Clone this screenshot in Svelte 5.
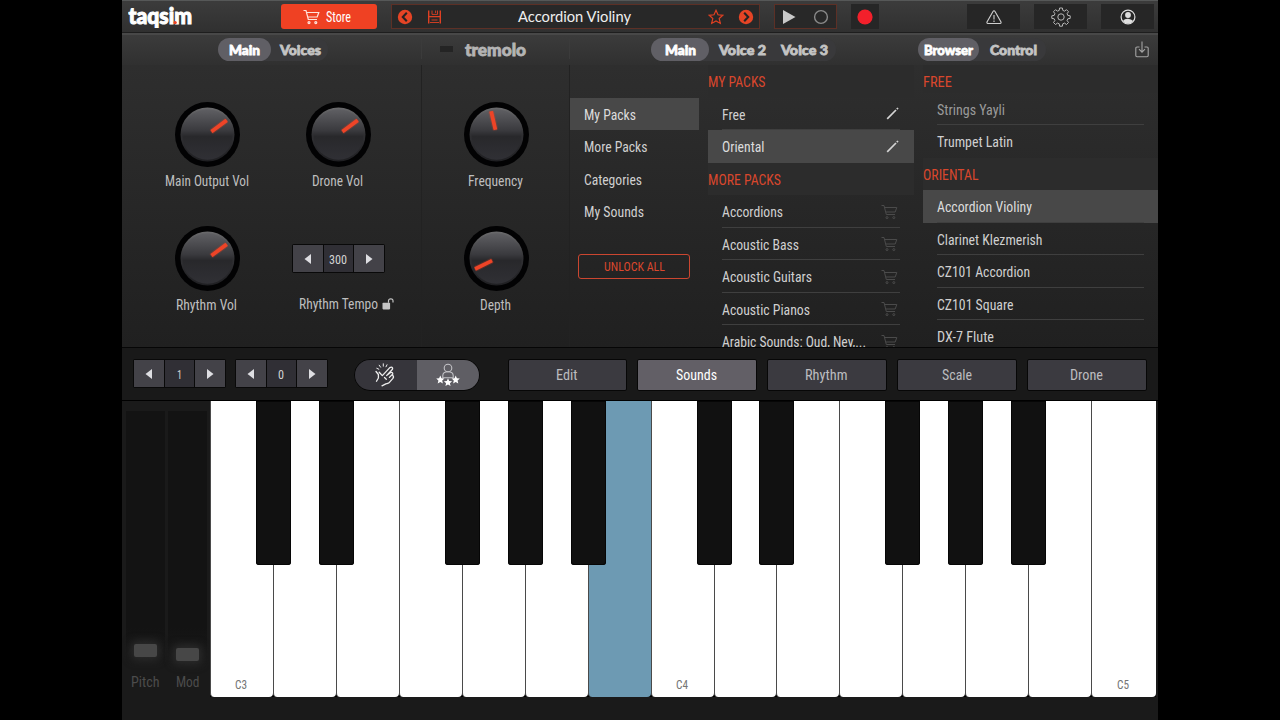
<script lang="ts">
  type Item = { name: string; w: number; icon?: string; selected?: boolean; dim?: boolean; line?: boolean };

  const menu: Item[] = [
    { name: 'My Packs', w: 52, selected: true },
    { name: 'More Packs', w: 63.5 },
    { name: 'Categories', w: 58 },
    { name: 'My Sounds', w: 60 },
  ];
  const myPacks: Item[] = [
    { name: 'Free', w: 23.5, icon: 'edit', line: true },
    { name: 'Oriental', w: 42.5, icon: 'edit', selected: true },
  ];
  const morePacks: Item[] = [
    { name: 'Accordions', w: 61, icon: 'cart', line: true },
    { name: 'Acoustic Bass', w: 77, icon: 'cart', line: true },
    { name: 'Acoustic Guitars', w: 90, icon: 'cart', line: true },
    { name: 'Acoustic Pianos', w: 88, icon: 'cart', line: true },
    { name: 'Arabic Sounds: Oud, Ney,...', w: 144, icon: 'cart' },
  ];
  const freeSounds: Item[] = [
    { name: 'Strings Yayli', w: 68, dim: true, line: true },
    { name: 'Trumpet Latin', w: 76 },
  ];
  const orientalSounds: Item[] = [
    { name: 'Accordion Violiny', w: 95, selected: true, line: true },
    { name: 'Clarinet Klezmerish', w: 105.5, line: true },
    { name: 'CZ101 Accordion', w: 93, line: true },
    { name: 'CZ101 Square', w: 76.5, line: true },
    { name: 'DX-7 Flute', w: 57 },
  ];
  const views = [
    { name: 'Edit', w: 21.5 },
    { name: 'Sounds', w: 41 },
    { name: 'Rhythm', w: 42.5 },
    { name: 'Scale', w: 30 },
    { name: 'Drone', w: 33 },
  ];

  // two octaves plus the closing C
  const notes = 'CDEFGABCDEFGABC'.split('');
  const labels: Record<number, string> = { 0: 'C3', 7: 'C4', 14: 'C5' };
  const pressed = 6;

  let view = $state('Sounds');
</script>

{#snippet fit(text: string, w: number, size = 14, cls = '')}
  <svg class="fit {cls}" width={w} height="16">
    <text x="0" y={8 + size * 0.355} font-size={size} textLength={w} lengthAdjust="spacingAndGlyphs">{text}</text>
  </svg>
{/snippet}

{#snippet cart()}
  <svg class="cart" viewBox="0 0 17 16" width="17" height="16">
    <path d="M.5 1.5H3L5.3 10.5H14M3.6 3.5H15.8L14.2 8H4.8" />
    <circle cx="6" cy="13.6" r="1" /><circle cx="12.8" cy="13.6" r="1" />
  </svg>
{/snippet}

{#snippet knob(name: string, w: number, angle: number)}
  <div class="control">
    <svg class="knob" viewBox="0 0 65 65" width="65" height="65">
      <circle cx="32.5" cy="32.5" r="32.5" fill="#020203" />
      <circle cx="32.5" cy="32.5" r="27" fill="url(#rim)" />
      <circle cx="32.5" cy="32.5" r="25.2" fill="url(#cap)" />
      <g transform="rotate({angle} 32.5 32.5)">
        <rect x="29.5" y="8" width="6" height="20.5" rx="2" fill="#e8401f" opacity=".22" />
        <rect x="30.6" y="8.6" width="3.8" height="19" rx=".6" fill="#ee4427" />
      </g>
    </svg>
    <div class="caption">{@render fit(name, w)}</div>
  </div>
{/snippet}

{#snippet stepper(value: string, w: number)}
  <div class="stepper">
    <button type="button" aria-label="Previous"><svg width="8" height="10"><path d="M7 0V10L.5 5Z" /></svg></button>
    <span>{@render fit(value, w, 13)}</span>
    <button type="button" aria-label="Next"><svg width="8" height="10"><path d="M1 0V10L7.5 5Z" /></svg></button>
  </div>
{/snippet}

{#snippet rows(items: Item[])}
  {#each items as item}
    <div class="row" class:selected={item.selected} class:dim={item.dim}>
      <div class="inner" class:line={item.line}>
        {@render fit(item.name, item.w)}
        {#if item.icon === 'cart'}
          {@render cart()}
        {:else if item.icon === 'edit'}
          <svg class="pencil" width="13" height="13"><path d="M1.2 11.8L10 3" /><path d="M10.8 2.2L12 1" /></svg>
        {/if}
      </div>
    </div>
  {/each}
{/snippet}

<svg class="defs" width="0" height="0">
  <linearGradient id="cap" x1="0" y1="0" x2="0" y2="1">
    <stop offset="0" stop-color="#5f5f63" />
    <stop offset=".42" stop-color="#3a3a3e" />
    <stop offset=".54" stop-color="#28282b" />
    <stop offset="1" stop-color="#303035" />
  </linearGradient>
  <linearGradient id="rim" x1="0" y1="0" x2="0" y2="1">
    <stop offset="0" stop-color="#6a6a6c" />
    <stop offset=".5" stop-color="#303033" />
    <stop offset="1" stop-color="#1f1f22" />
  </linearGradient>
</svg>

<div class="stage">
  <main class="app">
    <header class="top">
      <div class="logo">
        <svg width="66" height="28"><text x="0.5" y="23.5" font-size="22" textLength="63.5" lengthAdjust="spacingAndGlyphs">taqsim</text><circle cx="47.2" cy="22.6" r="1.6" /></svg>
      </div>
      <button type="button" class="store">{@render cart()}{@render fit('Store', 25)}</button>
      <div class="preset">
        <svg class="round" width="16" height="16"><circle cx="8" cy="8" r="7.2" /><path d="M9.8 3.8L5.8 8L9.8 12.2" /></svg>
        <svg class="save" width="13" height="14"><path d="M.7 .5V13.5M12.3 .5V13.5M.7 6.6H12.3" /><path class="thin" d="M4 .5V4.4H9.5V.5M7.6 .5V3M3.5 10H9.5M2 12.5H11" /></svg>
        <div class="title">{@render fit('Accordion Violiny', 113, 15)}</div>
        <svg class="star" width="16" height="16"><path d="M8 1.3L10 5.8L14.8 6.3L11.2 9.5L12.3 14.4L8 11.9L3.7 14.4L4.8 9.5L1.2 6.3L6 5.8Z" /></svg>
        <svg class="round" width="16" height="16"><circle cx="8" cy="8" r="7.2" /><path d="M6.2 3.8L10.2 8L6.2 12.2" /></svg>
      </div>
      <div class="transport">
        <svg width="14" height="16"><path d="M1 1L13.5 8L1 15Z" fill="#c9c9c9" /></svg>
        <svg width="16" height="16"><circle cx="8" cy="8" r="6.4" fill="none" stroke="#8a8a8a" stroke-width="1.4" /></svg>
      </div>
      <div class="slot rec"><svg width="16" height="16"><circle cx="8" cy="8" r="7.6" fill="#f3202b" /></svg></div>
      <div class="slot warn">
        <svg class="icon" width="16" height="16"><path d="M8 1.8Q8.6 1.8 9 2.5L15 13Q15.4 14.4 14.2 14.5H1.8Q.6 14.4 1 13L7 2.5Q7.4 1.8 8 1.8ZM8 6V10.4M8 11.6V13" /></svg>
      </div>
      <div class="slot gear">
        <svg class="icon" viewBox="0 0 20 20" width="20" height="20">
          <path d="M8.6 1h2.8l.4 2.4 1.7.7 2-1.4 2 2-1.4 2 .7 1.7 2.4.4v2.6l-2.4.4-.7 1.7 1.4 2-2 2-2-1.4-1.7.7-.4 2.4H8.6l-.4-2.4-1.7-.7-2 1.4-2-2 1.4-2-.7-1.7L.8 11.4V8.8l2.4-.4.7-1.7-1.4-2 2-2 2 1.4 1.7-.7Z" />
          <circle cx="10" cy="10" r="3.2" />
        </svg>
      </div>
      <div class="slot user">
        <svg width="16" height="16" fill="none" stroke="#dedede">
          <circle cx="8" cy="8" r="6.9" stroke-width="1.2" />
          <circle cx="8" cy="6" r="2.9" fill="#dedede" stroke="none" />
          <path d="M2.8 12Q4.8 9.6 8 9.8T13.2 12Q11.3 14.6 8 14.6T2.8 12Z" fill="#dedede" stroke="none" />
        </svg>
      </div>
    </header>

    <nav class="tabs">
      <div class="group first">
        <span class="tab on">{@render fit('Main', 31, 13.5, 'display')}</span>
        <span class="tab">{@render fit('Voices', 41, 13.5, 'display')}</span>
      </div>
      <div class="tremolo"><i class="led"></i>{@render fit('tremolo', 61, 17, 'display')}</div>
      <div class="group second">
        <span class="tab on">{@render fit('Main', 31, 13.5, 'display')}</span>
        <span class="tab">{@render fit('Voice 2', 47, 13.5, 'display')}</span>
        <span class="tab">{@render fit('Voice 3', 47, 13.5, 'display')}</span>
      </div>
      <div class="group third">
        <span class="tab on">{@render fit('Browser', 49, 13.5, 'display')}</span>
        <span class="tab">{@render fit('Control', 47, 13.5, 'display')}</span>
      </div>
      <svg class="import" width="14" height="17"><path d="M4.5 6H2Q.8 6 .8 7.2V14.5Q.8 15.7 2 15.7H12Q13.2 15.7 13.2 14.5V7.2Q13.2 6 12 6H9.5M7 .5V11M4 8.2L7 11.2L10 8.2" /></svg>
    </nav>

    <section class="panel">
      <div class="knobs main">
        {@render knob('Main Output Vol', 84, 53.5)}
        {@render knob('Drone Vol', 51, 53.5)}
        {@render knob('Rhythm Vol', 61, 53.5)}
        <div class="control tempo">
          {@render stepper('300', 18)}
          <div class="caption">
            {@render fit('Rhythm Tempo', 79)}
            <svg class="lock" width="13" height="12"><rect x=".5" y="4.8" width="7.6" height="6.6" rx=".8" /><path d="M6.5 4.8V3Q6.5 .8 8.8 .8T11 3V4.6" /></svg>
          </div>
        </div>
      </div>
      <div class="knobs trem">
        {@render knob('Frequency', 55, -13)}
        {@render knob('Depth', 31, -116)}
      </div>
      <div class="menu">
        {@render rows(menu)}
        <button type="button" class="unlock">{@render fit('UNLOCK ALL', 61, 12.5)}</button>
      </div>
      <div class="packs">
        <h2>{@render fit('MY PACKS', 57.5)}</h2>
        {@render rows(myPacks)}
        <h2>{@render fit('MORE PACKS', 73)}</h2>
        {@render rows(morePacks)}
      </div>
      <div class="sounds">
        <h2 class="stuck">{@render fit('FREE', 29)}</h2>
        {@render rows(freeSounds)}
        <h2>{@render fit('ORIENTAL', 55.5)}</h2>
        {@render rows(orientalSounds)}
      </div>
    </section>

    <div class="toolbar">
      {@render stepper('1', 5)}
      {@render stepper('0', 6)}
      <div class="mode">
        <span>
          <svg class="hand" viewBox="0 0 22 24" width="22" height="24">
            <path d="M2 8.5L4.4 11.5V15L2.5 18.3M5.2 9.2L8.3 12.6L15.8 4.6Q17.6 3.4 18.5 4.8Q19 5.8 18 6.8L12.6 12.6L16.6 9.6Q18.6 9 18.8 11L15.4 14.4M18.6 12.2Q20.2 13.6 18.9 15.4L15.4 19.4Q14 20.6 11.8 20.8L8 22.8M10.5 14.5L12.3 16.2" />
            <path class="snap" d="M5.2 2.2L6.6 4.2M9.3 .8V3.2M13 1.8L12 3.8M2.8 5.3L4.8 6.2" />
          </svg>
        </span>
        <span class="on">
          <svg class="person" viewBox="0 0 24 24" width="24" height="24">
            <circle cx="12" cy="5" r="3.8" />
            <path d="M6.8 14.8V12.5Q7 8.8 12 8.8T17.2 12.5V14.8Z" />
            <g>
              <path id="pip" d="M4.3 12.6L5.5 15.3L8.4 15.6L6.2 17.6L6.9 20.5L4.3 19L1.7 20.5L2.4 17.6L.2 15.6L3.1 15.3Z" />
              <use href="#pip" x="7.7" y="2.6" /><use href="#pip" x="15.4" />
            </g>
          </svg>
        </span>
      </div>
      <div class="views">
        {#each views as v}
          <button type="button" class:on={view === v.name} onclick={() => (view = v.name)}>{@render fit(v.name, v.w)}</button>
        {/each}
      </div>
    </div>

    <section class="play">
      <div class="wheels">
        <div class="wheel"><div class="track pitch"><i></i></div>{@render fit('Pitch', 28.5)}</div>
        <div class="wheel"><div class="track"><i></i></div>{@render fit('Mod', 23.5)}</div>
      </div>
      <div class="keys">
        {#each notes as note, i}
          <div class="key" class:pressed={i === pressed}>
            {#if i < notes.length - 1 && note !== 'E' && note !== 'B'}<i class="black"></i>{/if}
            {#if labels[i]}{@render fit(labels[i], 12, 12)}{/if}
          </div>
        {/each}
      </div>
    </section>
  </main>
</div>

<style>
  :global(body) { background: #000; }
  .stage {
    width: 1280px;
    height: 720px;
    overflow: hidden;
    background: #000;
    font-family: 'Roboto Condensed', Roboto, sans-serif;
  }
  .app {
    box-sizing: border-box;
    width: 1036px;
    height: 720px;
    margin-left: 122px;
    display: flex;
    flex-direction: column;
    background: #1b1b1b;
    color: #d2d2d2;
  }
  svg { display: block; flex: none; }
  .defs { position: absolute; }
  .fit { overflow: visible; fill: currentColor; }
  .display { font-family: Lato, sans-serif; font-weight: 900; stroke: currentColor; stroke-width: 0.8; }
  button { font: inherit; color: inherit; padding: 0; border: 0; cursor: pointer; }

  .top {
    display: flex;
    align-items: flex-start;
    box-sizing: border-box;
    height: 33px;
    padding: 4px 0 0 6px;
    background: linear-gradient(#3c3c3c, #303030);
    box-shadow: inset 0 1px #565858;
    border-bottom: 1px solid #1e1e1e;
  }
  .logo { width: 152.5px; margin-top: -4px; height: 28px; }
  .logo text { font-family: Lato, sans-serif; font-weight: 900; fill: #fff; stroke: #fff; stroke-width: 1; }
  .logo circle { fill: #ef4123; }
  .store {
    display: flex;
    align-items: center;
    justify-content: center;
    gap: 5px;
    width: 96.5px;
    height: 25px;
    margin-right: 14px;
    border-radius: 3px;
    background: #ef4123;
    color: #fff;
  }
  .store .fit { position: relative; left: -1px; }
  .cart { fill: none; stroke: #4b4b4b; stroke-width: 1; }
  .store .cart { stroke: #ffe3dc; stroke-width: 1.2; position: relative; left: -2px; }
  .preset, .transport {
    display: flex;
    align-items: center;
    box-sizing: border-box;
    height: 25px;
    border: 1px solid #5d3026;
    background: #282828;
  }
  .preset { width: 369px; padding: 0 5px 0 5px; margin-right: 14px; }
  .save { margin-left: 15px; fill: none; stroke: #e04022; stroke-width: 1.4; }
  .save .thin { stroke-width: 0.9; }
  .title { flex: 1; display: flex; justify-content: center; font-family: Lato, sans-serif; color: #efefef; }
  .star { margin-right: 14px; fill: none; stroke: #e04022; stroke-width: 1.2; }
  .round { fill: #e64425; }
  .round path { fill: none; stroke: #272322; stroke-width: 2.1; }
  .transport { width: 63px; padding: 0 7px; justify-content: space-between; margin-right: 14px; }
  .slot { display: flex; align-items: center; justify-content: center; width: 53px; height: 25px; background: #262626; margin-right: 14px; }
  .rec { width: 28px; margin-right: 88px; }
  .user { margin-right: 0; }
  .icon { fill: none; stroke: #cfcfcf; stroke-width: 1.1; }
  .gear .icon { stroke: #b8b8b8; stroke-width: 1; }

  .tabs {
    display: flex;
    align-items: center;
    height: 32px;
    background: linear-gradient(#3c3c3c, #303030);
    box-shadow: inset 0 2px #484848;
  }
  .tabs .fit { position: relative; top: 0.5px; }
  .group { display: flex; align-items: center; height: 23px; border-radius: 12px; background: #39393b; color: #c4c4c4; }
  .tab { display: flex; align-items: center; justify-content: center; height: 23px; border-radius: 12px; }
  .tab.on { background: #605f65; color: #fff; }
  .first { width: 110px; margin-left: 96px; gap: 9px; }
  .first .on { width: 53px; }
  .tremolo {
    display: flex;
    align-items: center;
    gap: 12px;
    box-sizing: border-box;
    width: 149px;
    height: 20px;
    margin-left: 93px;
    padding-left: 18px;
    border-left: 1px solid #3b3b3b;
    border-right: 1px solid #3b3b3b;
    color: #b4b4b4;
  }
  .led { width: 13px; height: 6px; background: #242424; }
  .second { width: 185px; margin-left: 81px; }
  .second .on { width: 58px; margin-right: 10px; }
  .second .tab + .tab + .tab { margin-left: 15px; }
  .third { width: 128px; margin-left: 82px; gap: 11px; }
  .third .on { width: 61px; }
  .import { margin-left: 88.5px; fill: none; stroke: #a4a4a4; stroke-width: 1.1; }

  .panel {
    display: flex;
    height: 282px;
    overflow: hidden;
    background: linear-gradient(#2e2e2e, #202020);
    border-bottom: 1px solid #060606;
  }
  .panel .fit { position: relative; top: 0.8px; }
  .knobs { display: grid; grid-auto-rows: 124.5px; padding-top: 36px; box-sizing: border-box; border-right: 1px solid #222; }
  .knobs.main { width: 300px; grid-template-columns: 131px 131px; padding-left: 20px; }
  .knobs.trem { width: 148px; grid-template-columns: 148px; }
  .knob { position: relative; top: 0.5px; }
  .control { display: flex; flex-direction: column; align-items: center; gap: 6px; }
  .trem .control { padding-left: 1px; }
  .caption { position: relative; left: -1px; color: #bebebe; }
  .tempo { padding-top: 18.5px; gap: 22.5px; margin-left: -1px; }
  .tempo .caption { left: 0; }
  .lock { position: absolute; left: 83.5px; top: 2.5px; fill: #c4c4c4; }
  .lock path { fill: none; stroke: #c4c4c4; stroke-width: 1.2; }
  .stepper { display: flex; gap: 1px; padding: 1px; background: #090909; border-radius: 2px; }
  .stepper > * { display: flex; align-items: center; justify-content: center; width: 30px; height: 27px; background: #434248; }
  .stepper > span { width: 29px; background: #302f35; }
  .stepper path { fill: #dedee2; }

  .row { height: 32.5px; padding-left: 14px; color: #d0d0d0; }
  .row.selected { background: #484848; color: #dcdcdc; }
  .row.dim { color: #9a9a9a; }
  .inner { display: flex; align-items: center; justify-content: space-between; box-sizing: border-box; height: 32.5px; }
  .inner.line { border-bottom: 1px solid #3f3f3f; padding-top: 1px; }
  .pencil { fill: none; stroke: #d4d4d4; stroke-width: 1.7; margin-right: 1px; }
  .inner .cart { margin-right: 2px; position: relative; top: 0.5px; }
  h2 { display: flex; align-items: center; height: 32.5px; margin: 0; font-weight: 400; color: #d9472d; background: #2c2c2c; }
  .menu { width: 129px; padding-top: 32.5px; margin-right: 9px; }
  .unlock {
    display: flex;
    align-items: center;
    justify-content: center;
    box-sizing: border-box;
    width: 112px;
    height: 25px;
    margin: 26px 0 0 8px;
    border: 1px solid #cb4630;
    border-radius: 3px;
    background: none;
    color: #d9472d;
  }
  .packs { width: 206px; margin-right: 9px; }
  .packs .inner { width: 178px; }
  .sounds { flex: 1; }
  .sounds .inner { width: 207px; }
  h2.stuck { height: 23.5px; padding-top: 4px; }

  .toolbar { display: flex; align-items: flex-start; box-sizing: border-box; height: 53px; padding: 11px 0 0 10.5px; background: #191919; border-bottom: 1px solid #000; }
  .toolbar .stepper { margin-right: 9px; }
  .mode { display: flex; width: 124px; height: 30px; margin: 0 27.5px 0 17.5px; border: 1px solid #070707; border-radius: 16px; overflow: hidden; }
  .mode span { display: flex; align-items: center; justify-content: center; width: 62px; background: #36353b; }
  .mode span.on { background: #5f5e64; }
  .hand { fill: none; stroke: #ededed; stroke-width: 1.3; stroke-linecap: round; stroke-linejoin: round; position: relative; left: -1px; }
  .hand .snap { stroke-width: 1; }
  .person { fill: none; stroke: #c4c4c8; stroke-width: 1.1; }
  .person g { fill: #fff; stroke: none; }
  .views { display: flex; gap: 10px; }
  .views button { display: flex; align-items: center; justify-content: center; box-sizing: border-box; width: 119.9px; height: 31.5px; border: 1px solid #070707; border-radius: 2px; background: #3b3a40; color: #bcbcbf; }
  .views button.on { background: #625f66; color: #fff; }
  .views .fit { position: relative; left: -0.5px; }

  .play { display: flex; flex: 1; background: #1a1a1a; }
  .wheels { display: flex; width: 84px; padding: 10px 0 0 4px; gap: 3px; color: #4c4c4c; }
  .wheel { display: flex; flex-direction: column; align-items: center; width: 39px; gap: 8px; }
  .track { display: flex; align-items: flex-end; justify-content: center; box-sizing: border-box; width: 39px; height: 255px; padding-bottom: 5px; background: linear-gradient(#131313 85%, #1a1a1a); }
  .track.pitch { padding-bottom: 9px; }
  .track i { width: 23px; height: 13px; border-radius: 2px; background: #474747; box-shadow: 0 0 8px 3px #2c2c2c; }
  .keys { display: flex; height: 296px; background: #000; }
  .key {
    position: relative;
    display: flex;
    align-items: flex-end;
    justify-content: center;
    box-sizing: border-box;
    width: 62.95px;
    height: 296px;
    padding-bottom: 4px;
    border-left: 1px solid #4a4a4a;
    border-radius: 0 0 4px 4px;
    background: #fff;
    color: #757575;
  }
  .key .fit { position: relative; left: -1px; }
  .key:last-child { width: 65px; }
  .key.pressed { background: #6d9ab3; }
  .black { position: absolute; z-index: 1; top: 0; right: -18px; width: 35px; height: 164px; border-radius: 0 0 3px 3px; background: #111; box-shadow: inset 0 0 0 1px #060606; }
</style>
